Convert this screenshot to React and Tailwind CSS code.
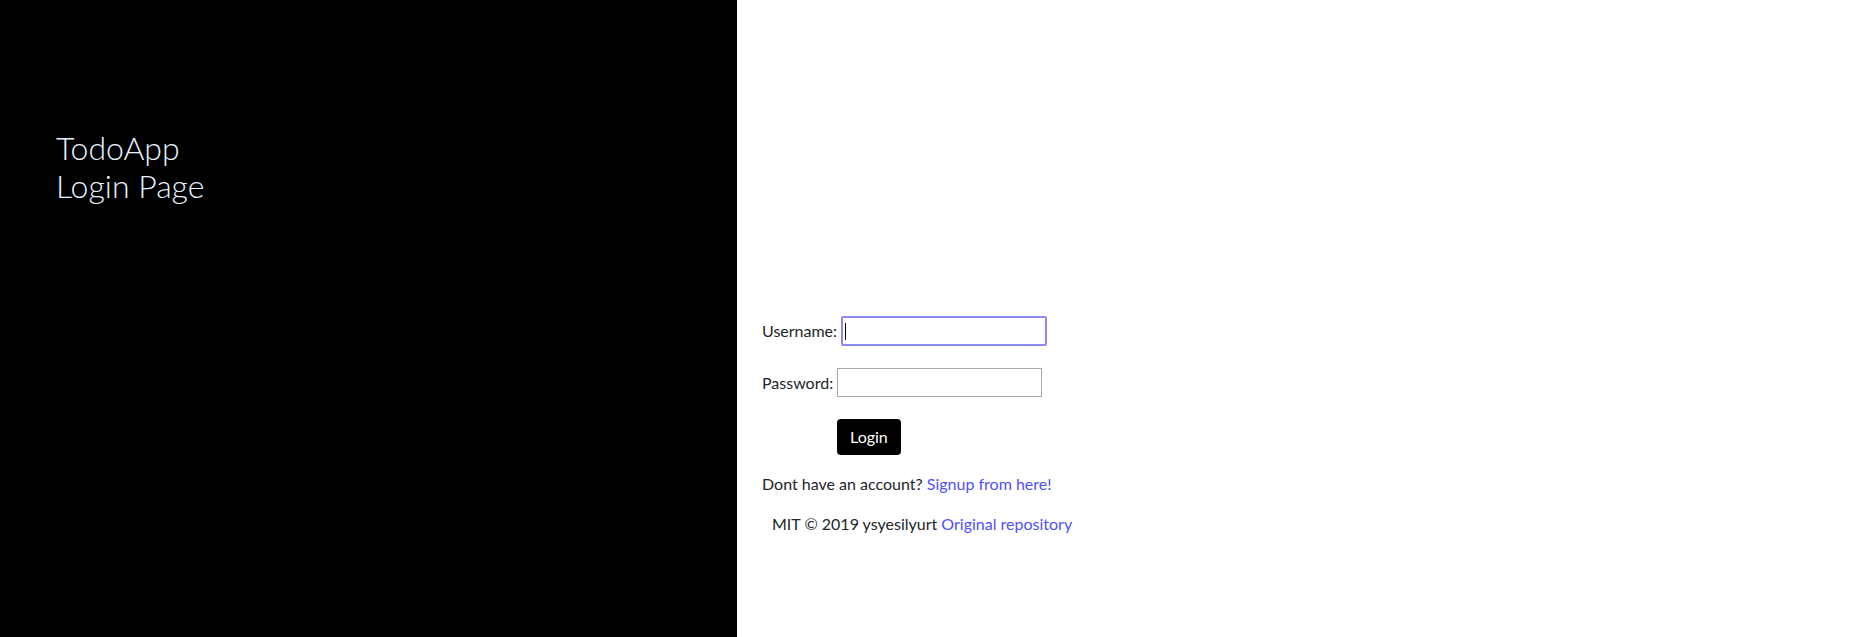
import React from "react"

export default function App() {
    return (
        <div className="flex h-[637px] w-full bg-white font-['Lato','Liberation_Sans',sans-serif] text-[16px] leading-[24px] text-[#212529]">
            {/* left panel */}
            <div className="w-[737px] shrink-0 bg-black pl-[56px] pt-[129px]">
                <h1 className="text-[32px] font-light leading-[38px] text-[#e8f2ff]">
                    TodoApp
                    <br />
                    Login Page
                </h1>
            </div>

            {/* login form */}
            <div className="flex-1 pl-[25px] pt-[316px]">
                <div className="flex h-[30px] items-center">
                    <label>Username:</label>
                    <div className="ml-[4px] flex h-[30px] w-[206px] items-center rounded-[2px] border-2 border-[#8a8af2] pl-[2px]">
                        <span className="h-[17px] w-px bg-black" />
                    </div>
                </div>

                <div className="mt-[22px] flex h-[29px] items-center">
                    <label>Password:</label>
                    <input
                        type="password"
                        className="ml-[4px] h-[29px] w-[205px] border border-[#a9a9a9] px-[2px] outline-none"
                    />
                </div>

                <button className="ml-[75px] mt-[22px] h-[36px] rounded-[4px] bg-black px-[13px] text-white">
                    Login
                </button>

                <p className="mt-[17px]">
                    Dont have an account?{" "}
                    <a className="text-[#5050ff]">Signup from here!</a>
                </p>

                <p className="mt-[16px] pl-[10px]">
                    MIT © 2019 ysyesilyurt{" "}
                    <a className="text-[#5050ff]">Original repository</a>
                </p>
            </div>
        </div>
    )
}
